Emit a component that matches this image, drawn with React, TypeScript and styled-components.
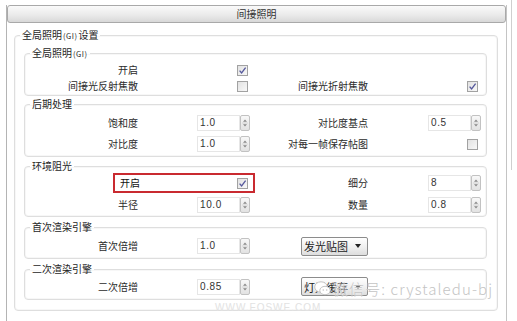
import styled, { createGlobalStyle } from "styled-components";

const GlobalStyle = createGlobalStyle`
  html, body {
    margin: 0;
    background: #ffffff;
  }
  body {
    font-family: "Noto Sans CJK SC", "Liberation Sans", sans-serif;
    color: #2b2b2b;
  }
`;

const Page = styled.div`
  position: relative;
  display: flex;
  flex-direction: row;
  align-items: flex-start;
  height: 321px;
  padding: 5px 0 0 6px;
  box-sizing: border-box;
  overflow: hidden;
`;

const Panel = styled.div`
  width: 501px;
  height: 316px;
  box-sizing: border-box;
  border-left: 1px solid #b4b4b4;
  border-right: 1px solid #c4c4c4;
  display: flex;
  flex-direction: column;
`;

const ScrollEdge = styled.div`
  width: 1px;
  height: 170px;
  margin-top: -5px;
  margin-left: 4px;
  background: #cfcfcf;
`;

const Header = styled.div`
  height: 18px;
  box-sizing: border-box;
  border: 1px solid #a9a9a9;
  border-radius: 3px;
  background: linear-gradient(#fafafa, #e9e9e9 60%, #d8d8d8);
  display: flex;
  align-items: center;
  justify-content: center;
  font-size: 10px;
  line-height: 14px;
  color: #333;
`;

const Body = styled.div`
  padding: 5px 8px 0 7px;
`;

const Group = styled.fieldset<{ $pad?: string }>`
  margin: 0;
  min-width: 0;
  padding: ${(p) => p.$pad ?? "0 5px 0 0"};
  border: 1px solid #dedede;
  border-radius: 4px;
  box-shadow: inset 0 0 0 1px #f7f7f7;
`;

const Legend = styled.legend`
  margin-left: 5px;
  padding: 0 2px;
  height: 14px;
  font-size: 10px;
  line-height: 14px;
  color: #262626;
  white-space: nowrap;
`;

const Small = styled.span`
  font-size: 7.5px;
  line-height: 0;
  letter-spacing: 0.5px;
  margin: 0 1px;
`;

const Stack = styled.div`
  display: flex;
  flex-direction: column;
  padding: 4px 10px 10px 9px;
`;

const Rows = styled.div<{ $rowH: number; $gap: number; $pt: number; $pb: number }>`
  display: grid;
  grid-template-columns: 113px 112px 118px 113px;
  grid-auto-rows: ${(p) => p.$rowH}px;
  row-gap: ${(p) => p.$gap}px;
  padding: ${(p) => p.$pt}px 0 ${(p) => p.$pb}px 0;
  align-items: center;
`;

const Gap = styled.div<{ $h: number }>`
  height: ${(p) => p.$h}px;
`;

const Label = styled.div<{ $col: number }>`
  grid-column: ${(p) => p.$col};
  justify-self: end;
  font-size: 10px;
  line-height: 14px;
  white-space: nowrap;
`;

const Cell = styled.div<{ $col: number; $mr?: number }>`
  grid-column: ${(p) => p.$col};
  justify-self: end;
  display: flex;
  margin-right: ${(p) => p.$mr ?? 0}px;
`;

const SpinBox = styled.div`
  display: flex;
  width: 53px;
  height: 16px;
`;

const SpinField = styled.div`
  flex: 1;
  box-sizing: border-box;
  border: 1px solid #e6e6e6;
  background: #fff;
  padding-left: 2px;
  font-family: "Liberation Sans", sans-serif;
  font-size: 10px;
  letter-spacing: 0.6px;
  line-height: 14px;
  color: #333;
`;

const SpinButton = styled.div`
  width: 10px;
  box-sizing: border-box;
  border: 1px solid #c2c2c2;
  border-radius: 2px;
  background: linear-gradient(#f8f8f8, #e2e2e2);
  display: flex;
  align-items: center;
  justify-content: center;
`;

const CheckBox = styled.div`
  width: 11px;
  height: 11px;
  box-sizing: border-box;
  border: 1px solid #a2a2a2;
  background: linear-gradient(135deg, #e2e2e2, #f8f8f8);
  display: flex;
  align-items: center;
  justify-content: center;
`;

const Select = styled.div`
  width: 67px;
  height: 19px;
  box-sizing: border-box;
  border: 1px solid #8c8c8c;
  border-radius: 2px;
  background: linear-gradient(#ffffff, #efefef 55%, #dddddd);
  display: flex;
  align-items: center;
  justify-content: space-between;
  padding: 0 6px 0 2px;
  font-size: 11px;
  line-height: 14px;
  color: #222;
`;

const Highlight = styled.div`
  grid-column: 1 / 3;
  justify-self: end;
  width: 142px;
  height: 20px;
  margin-right: -5px;
  box-sizing: border-box;
  border: 2px solid #c92a30;
  display: flex;
  align-items: center;
  justify-content: space-between;
  padding: 0 5px 0 5px;
  font-size: 10px;
  line-height: 14px;
  color: #111;
`;

const Watermark = styled.div`
  position: absolute;
  left: 314px;
  top: 278px;
  display: flex;
  align-items: center;
  gap: 2px;
  font-size: 15px;
  font-weight: 300;
  letter-spacing: 1.1px;
  color: #c4c4c4;
  text-shadow: 0 0 2px #ffffff;
`;

const SiteMark = styled.div`
  position: absolute;
  left: 215px;
  top: 302px;
  font-family: "Liberation Sans", sans-serif;
  font-size: 10px;
  letter-spacing: 1px;
  color: #e2e2e2;
`;

function Spin({ value }: { value: string }) {
  return (
    <SpinBox>
      <SpinField>{value}</SpinField>
      <SpinButton>
        <svg width="6" height="10" viewBox="0 0 6 10">
          <path d="M3 1.5 L5 3.8 H1 Z" fill="#8a8a8a" />
          <line x1="0" y1="5" x2="6" y2="5" stroke="#cfcfcf" strokeWidth="0.8" />
          <path d="M3 8.5 L5 6.2 H1 Z" fill="#8a8a8a" />
        </svg>
      </SpinButton>
    </SpinBox>
  );
}

function Check({ on }: { on?: boolean }) {
  return (
    <CheckBox>
      {on && (
        <svg width="9" height="9" viewBox="0 0 9 9">
          <path d="M1.6 4.6 L3.6 7 L7.6 1.6" fill="none" stroke="#55589c" strokeWidth="1.3" />
        </svg>
      )}
    </CheckBox>
  );
}

function Drop({ text }: { text: string }) {
  return (
    <Select>
      <span>{text}</span>
      <svg width="6" height="4" viewBox="0 0 6 4">
        <path d="M0 0 H6 L3 4 Z" fill="#222" />
      </svg>
    </Select>
  );
}

function WeChat() {
  return (
    <svg width="17" height="15" viewBox="0 0 17 15">
      <ellipse cx="7" cy="6" rx="6.3" ry="5.2" fill="#fff" stroke="#c4c4c4" strokeWidth="1" />
      <ellipse cx="11" cy="9.5" rx="5.2" ry="4.2" fill="#fff" stroke="#c4c4c4" strokeWidth="1" />
      <circle cx="9.3" cy="9" r="0.8" fill="#c4c4c4" />
      <circle cx="12.7" cy="9" r="0.8" fill="#c4c4c4" />
    </svg>
  );
}

export default function App() {
  return (
    <>
      <GlobalStyle />
      <Page>
        <Panel>
          <Header>间接照明</Header>
          <Body>
            <Group $pad="0">
              <Legend>
                全局照明<Small>(GI)</Small>设置
              </Legend>
              <Stack>
                <Group>
                  <Legend>
                    全局照明<Small>(GI)</Small>
                  </Legend>
                  <Rows $rowH={16} $gap={0} $pt={2} $pb={1}>
                    <Label $col={1}>开启</Label>
                    <Cell $col={2} $mr={2}>
                      <Check on />
                    </Cell>
                    <Label $col={1}>间接光反射焦散</Label>
                    <Cell $col={2} $mr={2}>
                      <Check />
                    </Cell>
                    <Label $col={3}>间接光折射焦散</Label>
                    <Cell $col={4} $mr={3}>
                      <Check on />
                    </Cell>
                  </Rows>
                </Group>
                <Gap $h={1} />
                <Group>
                  <Legend>后期处理</Legend>
                  <Rows $rowH={18} $gap={3} $pt={3} $pb={3}>
                    <Label $col={1}>饱和度</Label>
                    <Cell $col={2}>
                      <Spin value="1.0" />
                    </Cell>
                    <Label $col={3}>对比度基点</Label>
                    <Cell $col={4}>
                      <Spin value="0.5" />
                    </Cell>
                    <Label $col={1}>对比度</Label>
                    <Cell $col={2}>
                      <Spin value="1.0" />
                    </Cell>
                    <Label $col={3}>对每一帧保存帖图</Label>
                    <Cell $col={4} $mr={3}>
                      <Check />
                    </Cell>
                  </Rows>
                </Group>
                <Gap $h={2} />
                <Group>
                  <Legend>环境阻光</Legend>
                  <Rows $rowH={20} $gap={2} $pt={0} $pb={1}>
                    <Highlight>
                      <span>开启</span>
                      <Check on />
                    </Highlight>
                    <Label $col={3}>细分</Label>
                    <Cell $col={4}>
                      <Spin value="8" />
                    </Cell>
                    <Label $col={1}>半径</Label>
                    <Cell $col={2}>
                      <Spin value="10.0" />
                    </Cell>
                    <Label $col={3}>数量</Label>
                    <Cell $col={4}>
                      <Spin value="0.8" />
                    </Cell>
                  </Rows>
                </Group>
                <Gap $h={3} />
                <Group>
                  <Legend>首次渲染引擎</Legend>
                  <Rows $rowH={22} $gap={0} $pt={1} $pb={1}>
                    <Label $col={1}>首次倍增</Label>
                    <Cell $col={2}>
                      <Spin value="1.0" />
                    </Cell>
                    <Cell $col={3}>
                      <Drop text="发光贴图" />
                    </Cell>
                  </Rows>
                </Group>
                <Gap $h={3} />
                <Group>
                  <Legend>二次渲染引擎</Legend>
                  <Rows $rowH={21} $gap={0} $pt={0} $pb={2}>
                    <Label $col={1}>二次倍增</Label>
                    <Cell $col={2}>
                      <Spin value="0.85" />
                    </Cell>
                    <Cell $col={3}>
                      <Drop text="灯光缓存" />
                    </Cell>
                  </Rows>
                </Group>
              </Stack>
            </Group>
          </Body>
        </Panel>
        <ScrollEdge />
        <SiteMark>WWW.FOSWE.COM</SiteMark>
        <Watermark>
          <WeChat />
          <span>微信号: crystaledu-bj</span>
        </Watermark>
      </Page>
    </>
  );
}
